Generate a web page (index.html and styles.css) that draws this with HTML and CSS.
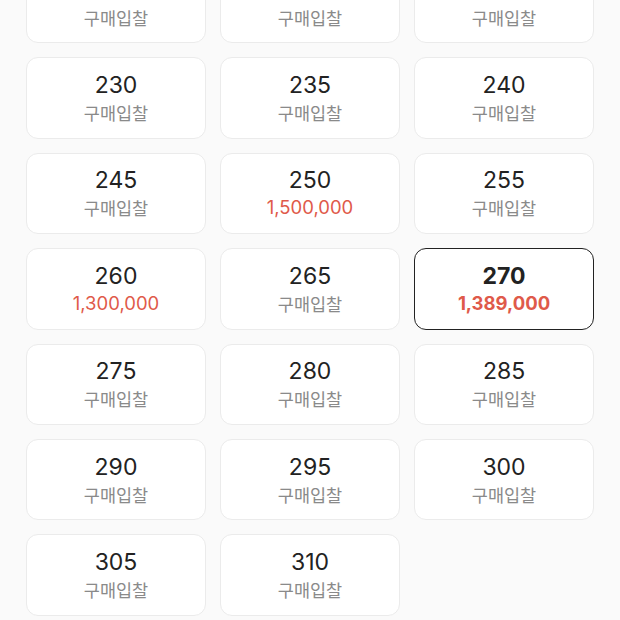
FILE: index.html
```html
<!DOCTYPE html>
<html lang="ko">
<head>
<meta charset="utf-8">
<link rel="stylesheet" href="styles.css">
</head>
<body>
<div class="grid">
  <div class="card"><div class="size">225</div><div class="price">구매입찰</div></div>
  <div class="card"><div class="size">228</div><div class="price">구매입찰</div></div>
  <div class="card"><div class="size">229</div><div class="price">구매입찰</div></div>
  <div class="card"><div class="size">230</div><div class="price">구매입찰</div></div>
  <div class="card"><div class="size">235</div><div class="price">구매입찰</div></div>
  <div class="card"><div class="size">240</div><div class="price">구매입찰</div></div>
  <div class="card"><div class="size">245</div><div class="price">구매입찰</div></div>
  <div class="card"><div class="size">250</div><div class="price red">1,500,000</div></div>
  <div class="card"><div class="size">255</div><div class="price">구매입찰</div></div>
  <div class="card"><div class="size">260</div><div class="price red">1,300,000</div></div>
  <div class="card"><div class="size">265</div><div class="price">구매입찰</div></div>
  <div class="card selected"><div class="size">270</div><div class="price red">1,389,000</div></div>
  <div class="card"><div class="size">275</div><div class="price">구매입찰</div></div>
  <div class="card"><div class="size">280</div><div class="price">구매입찰</div></div>
  <div class="card"><div class="size">285</div><div class="price">구매입찰</div></div>
  <div class="card"><div class="size">290</div><div class="price">구매입찰</div></div>
  <div class="card"><div class="size">295</div><div class="price">구매입찰</div></div>
  <div class="card"><div class="size">300</div><div class="price">구매입찰</div></div>
  <div class="card"><div class="size">305</div><div class="price">구매입찰</div></div>
  <div class="card"><div class="size">310</div><div class="price">구매입찰</div></div>
</div>
</body>
</html>
```
FILE: styles.css
```css
html, body {
  margin: 0;
  padding: 0;
  background: #fafafa;
  overflow: hidden;
}
body {
  font-family: "Inter", "Noto Sans CJK KR", sans-serif;
}
.grid {
  display: grid;
  grid-template-columns: repeat(3, 180px);
  column-gap: 14px;
  row-gap: 14px;
  padding: 0 26px;
  margin-top: -38px;
}
.card {
  box-sizing: border-box;
  height: 81.4px;
  background: #fff;
  border: 1px solid #ebebeb;
  border-radius: 12px;
  display: flex;
  flex-direction: column;
  align-items: center;
  justify-content: center;
  padding-top: 1px;
}
.size {
  font-size: 23px;
  line-height: 28px;
  color: #222;
}
.price {
  font-size: 17.5px;
  line-height: 27px;
  color: #8a8a8a;
  font-family: "Noto Sans CJK KR", sans-serif;
}
.price.red {
  font-family: "Inter", sans-serif;
  font-size: 18.5px;
  color: #df5a4a;
}
.card.selected {
  border: 1.5px solid #222;
}
.card.selected .size {
  font-weight: 700;
}
.card.selected .price {
  font-weight: 700;
}
```
